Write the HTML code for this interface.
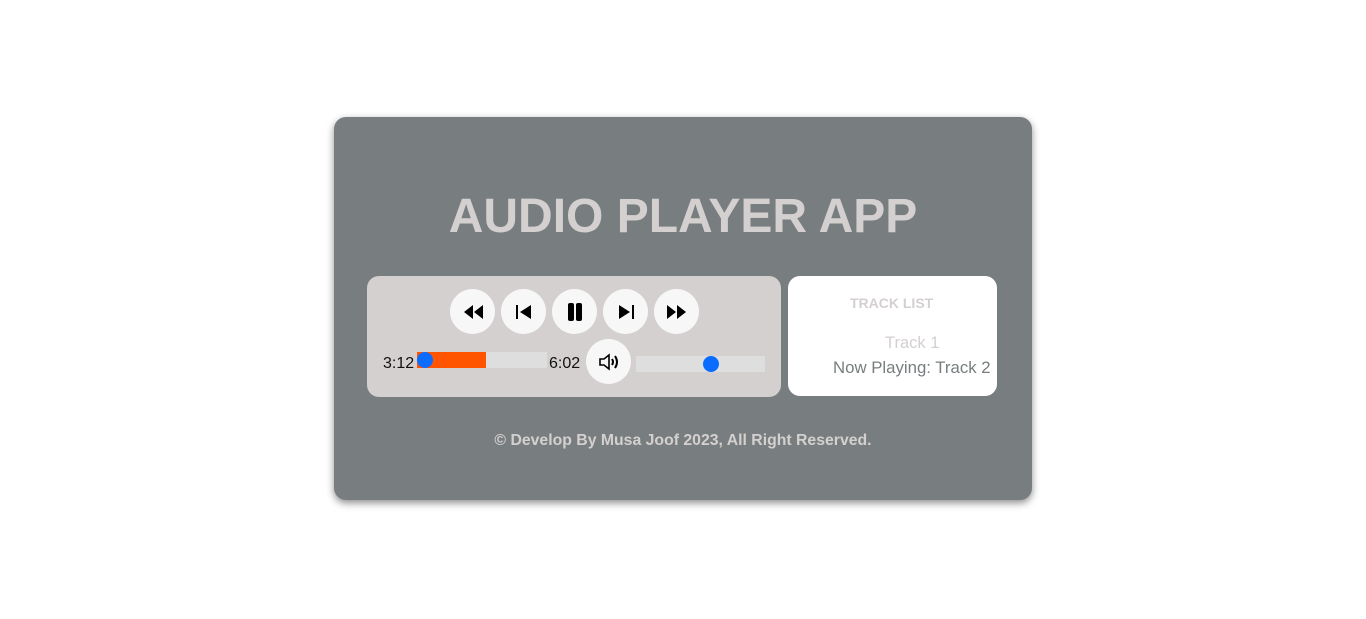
<!DOCTYPE html>
<html><head><style>
body{margin:0;width:1366px;height:619px;background:#fff;font-family:"Liberation Sans",sans-serif;position:relative;overflow:hidden}
.card{position:absolute;left:334px;top:117px;width:698px;height:383px;background:#787e7f;border-radius:12px;box-shadow:0 3px 8px rgba(0,0,0,.45)}
h1{position:absolute;left:334px;top:188px;width:698px;margin:0;text-align:center;font-size:48px;font-weight:bold;color:#d4d0cf;line-height:58px}
.lp{position:absolute;left:367px;top:276px;width:414px;height:121px;background:#d4d0cf;border-radius:12px}
.rp{position:absolute;left:788px;top:276px;width:209px;height:120px;background:#fff;border-radius:12px}
.b{position:absolute;width:45px;height:45px;border-radius:50%;background:#f7f7f7;display:flex;align-items:center;justify-content:center}
.t{position:absolute;font-size:16px;color:#111}
</style></head><body>
<div class="card"></div>
<h1>AUDIO PLAYER APP</h1>
<div class="lp"></div>
<div class="rp"></div>
<div class="b" style="left:450px;top:289px"><svg width="22" height="16" viewBox="0 0 22 16"><path d="M11 1L2 8l9 7zM21 1l-9 7 9 7z" fill="#000"/></svg></div>
<div class="b" style="left:501px;top:289px"><svg width="18" height="16" viewBox="0 0 18 16"><rect x="1" y="1" width="2" height="14"/><path d="M16 1L5 8l11 7z"/></svg></div>
<div class="b" style="left:552px;top:289px"><svg width="16" height="18" viewBox="0 0 16 18"><rect x="1" y="0" width="6" height="18" rx="2"/><rect x="9" y="0" width="6" height="18" rx="2"/></svg></div>
<div class="b" style="left:603px;top:289px"><svg width="18" height="16" viewBox="0 0 18 16"><path d="M2 1l11 7-11 7z"/><rect x="15" y="1" width="2" height="14"/></svg></div>
<div class="b" style="left:654px;top:289px"><svg width="22" height="16" viewBox="0 0 22 16"><path d="M1 1l9 7-9 7zM11 1l9 7-9 7z"/></svg></div>
<div class="t" style="left:383px;top:355px">3:12</div>
<div style="position:absolute;left:417px;top:352px;width:130px;height:16px;background:#dedede"></div>
<div style="position:absolute;left:417px;top:352px;width:69px;height:16px;background:#ff5500"></div>
<div style="position:absolute;left:417px;top:352px;width:16px;height:16px;border-radius:50%;background:#0a6cff"></div>
<div class="t" style="left:549px;top:355px">6:02</div>
<div class="b" style="left:586px;top:339px"><svg width="22" height="18" viewBox="0 0 22 18" fill="none" stroke="#000" stroke-width="1.6"><path d="M2 6h4l5-4v14l-5-4H2z"/><path d="M14 6q2 3 0 6M17 3q4 6 0 12" stroke-width="2"/></svg></div>
<div style="position:absolute;left:636px;top:356px;width:129px;height:16px;background:#dedede"></div>
<div style="position:absolute;left:703px;top:356px;width:16px;height:16px;border-radius:50%;background:#0a6cff"></div>
<div style="position:absolute;left:850px;top:295px;font-size:14px;color:#d4d0cf;font-weight:bold">TRACK LIST</div>
<div style="position:absolute;left:885px;top:334px;font-size:16.5px;color:#d4d0cf">Track 1</div>
<div style="position:absolute;left:833px;top:358px;font-size:16.8px;color:#787e7f">Now Playing: Track 2</div>
<div style="position:absolute;left:334px;width:698px;top:432px;text-align:center;font-size:15.8px;font-weight:bold;color:#d4d0cf">© Develop By Musa Joof 2023, All Right Reserved.</div>
</body></html>
